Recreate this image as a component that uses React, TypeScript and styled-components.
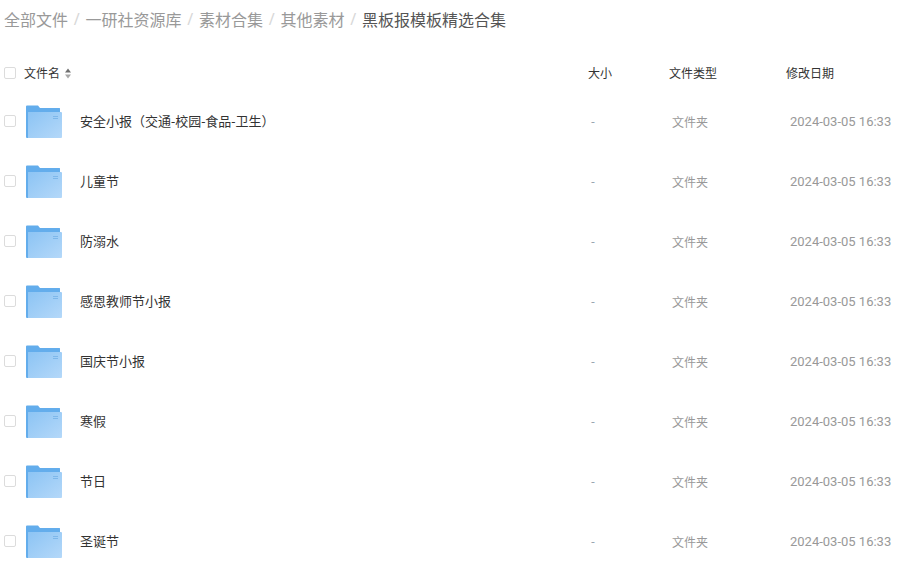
import { createGlobalStyle, styled } from 'styled-components';

const crumbs = ['全部文件', '一研社资源库', '素材合集', '其他素材'];

const files = [
  '安全小报（交通-校园-食品-卫生）',
  '儿童节',
  '防溺水',
  '感恩教师节小报',
  '国庆节小报',
  '寒假',
  '节日',
  '圣诞节',
];

const FolderIcon = () => (
  <svg width="36" height="34" viewBox="0 0 36 34">
    <defs>
      <linearGradient id="folderFront" x1="0" y1="0" x2="1" y2="1">
        <stop offset="0" stopColor="#8cc4f4" />
        <stop offset="1" stopColor="#b4d8f9" />
      </linearGradient>
    </defs>
    <path
      d="M0 1.5A1 1 0 0 1 1 0.5H12L14 3H33.5A0.5 0.5 0 0 1 34 3.5V33H1A1 1 0 0 1 0 32Z"
      fill="#63adec"
    />
    <path d="M2 7H35A1 1 0 0 1 36 8V32A1 1 0 0 1 35 33H2Z" fill="url(#folderFront)" />
    <path d="M27 11.5H32M27 13.5H32" stroke="#7db7ea" strokeWidth="1" />
  </svg>
);

const SortIcon = () => (
  <svg width="8" height="11" viewBox="0 0 8 11">
    <path d="M4 0.5L7 4.5H1Z" fill="#707070" />
    <path d="M4 10.5L1 6.5H7Z" fill="#a8a8a8" />
  </svg>
);

export default function App() {
  return (
    <>
      <GlobalStyle />
      <Page>
        <Breadcrumb>
          {crumbs.map((crumb) => (
            <Crumb key={crumb}>
              {crumb}
              <Separator>/</Separator>
            </Crumb>
          ))}
          <CurrentCrumb>黑板报模板精选合集</CurrentCrumb>
        </Breadcrumb>
        <HeaderRow>
          <NameHeader>
            <Checkbox />
            <span>文件名</span>
            <SortIcon />
          </NameHeader>
          <span>大小</span>
          <span>文件类型</span>
          <span>修改日期</span>
        </HeaderRow>
        {files.map((name) => (
          <FileRow key={name}>
            <NameCell>
              <Checkbox />
              <FolderIcon />
              <FileName>{name}</FileName>
            </NameCell>
            <DashCell>-</DashCell>
            <TypeCell>文件夹</TypeCell>
            <DateCell>2024-03-05 16:33</DateCell>
          </FileRow>
        ))}
      </Page>
    </>
  );
}

const GlobalStyle = createGlobalStyle`
  html, body {
    margin: 0;
    background: #fff;
    overflow: hidden;
  }

  body {
    font-family: "Noto Sans", "Noto Sans CJK SC", sans-serif;
  }
`;

const Page = styled.div`
  width: 898px;
  height: 578px;
  overflow: hidden;
  padding-left: 4px;
  box-sizing: border-box;
`;

const Breadcrumb = styled.div`
  height: 38px;
  margin-bottom: 2px;
  display: flex;
  align-items: center;
  font-size: 16px;
  color: #999;
  white-space: nowrap;
`;

const Crumb = styled.span`
  display: inline-flex;
  align-items: center;
`;

const Separator = styled.i`
  width: 17.5px;
  font-style: normal;
  text-align: center;
  color: #d8d8d8;
`;

const CurrentCrumb = styled.span`
  color: #555;
`;

const HeaderRow = styled.div`
  height: 51px;
  padding-top: 15px;
  box-sizing: border-box;
  display: grid;
  grid-template-columns: 584px 81px 117px auto;
  align-items: center;
  font-size: 12px;
  color: #333;
`;

const NameHeader = styled.div`
  display: flex;
  align-items: center;
  gap: 8px;

  & > svg {
    margin-left: -4px;
  }
`;

const Checkbox = styled.span`
  width: 12px;
  height: 12px;
  flex: none;
  box-sizing: border-box;
  border: 1px solid #dcdcdc;
  border-radius: 2px;
`;

const FileRow = styled.div`
  height: 60px;
  display: grid;
  grid-template-columns: 584px 81px 117px auto;
  align-items: center;
  font-size: 12px;
`;

const NameCell = styled.div`
  display: flex;
  align-items: center;

  & > svg {
    margin: 2px 0 0 10px;
  }
`;

const FileName = styled.span`
  margin-left: 18px;
  padding-bottom: 2px;
  font-size: 13px;
  color: #333;
`;

const DashCell = styled.span`
  padding-left: 3px;
  color: #9aa5b1;
`;

const TypeCell = styled.span`
  padding: 2px 0 0 3px;
  color: #999;
  white-space: nowrap;
`;

const DateCell = styled.span`
  padding-left: 4px;
  font-family: Roboto, "Noto Sans", sans-serif;
  font-size: 13px;
  color: #999;
  white-space: nowrap;
`;
